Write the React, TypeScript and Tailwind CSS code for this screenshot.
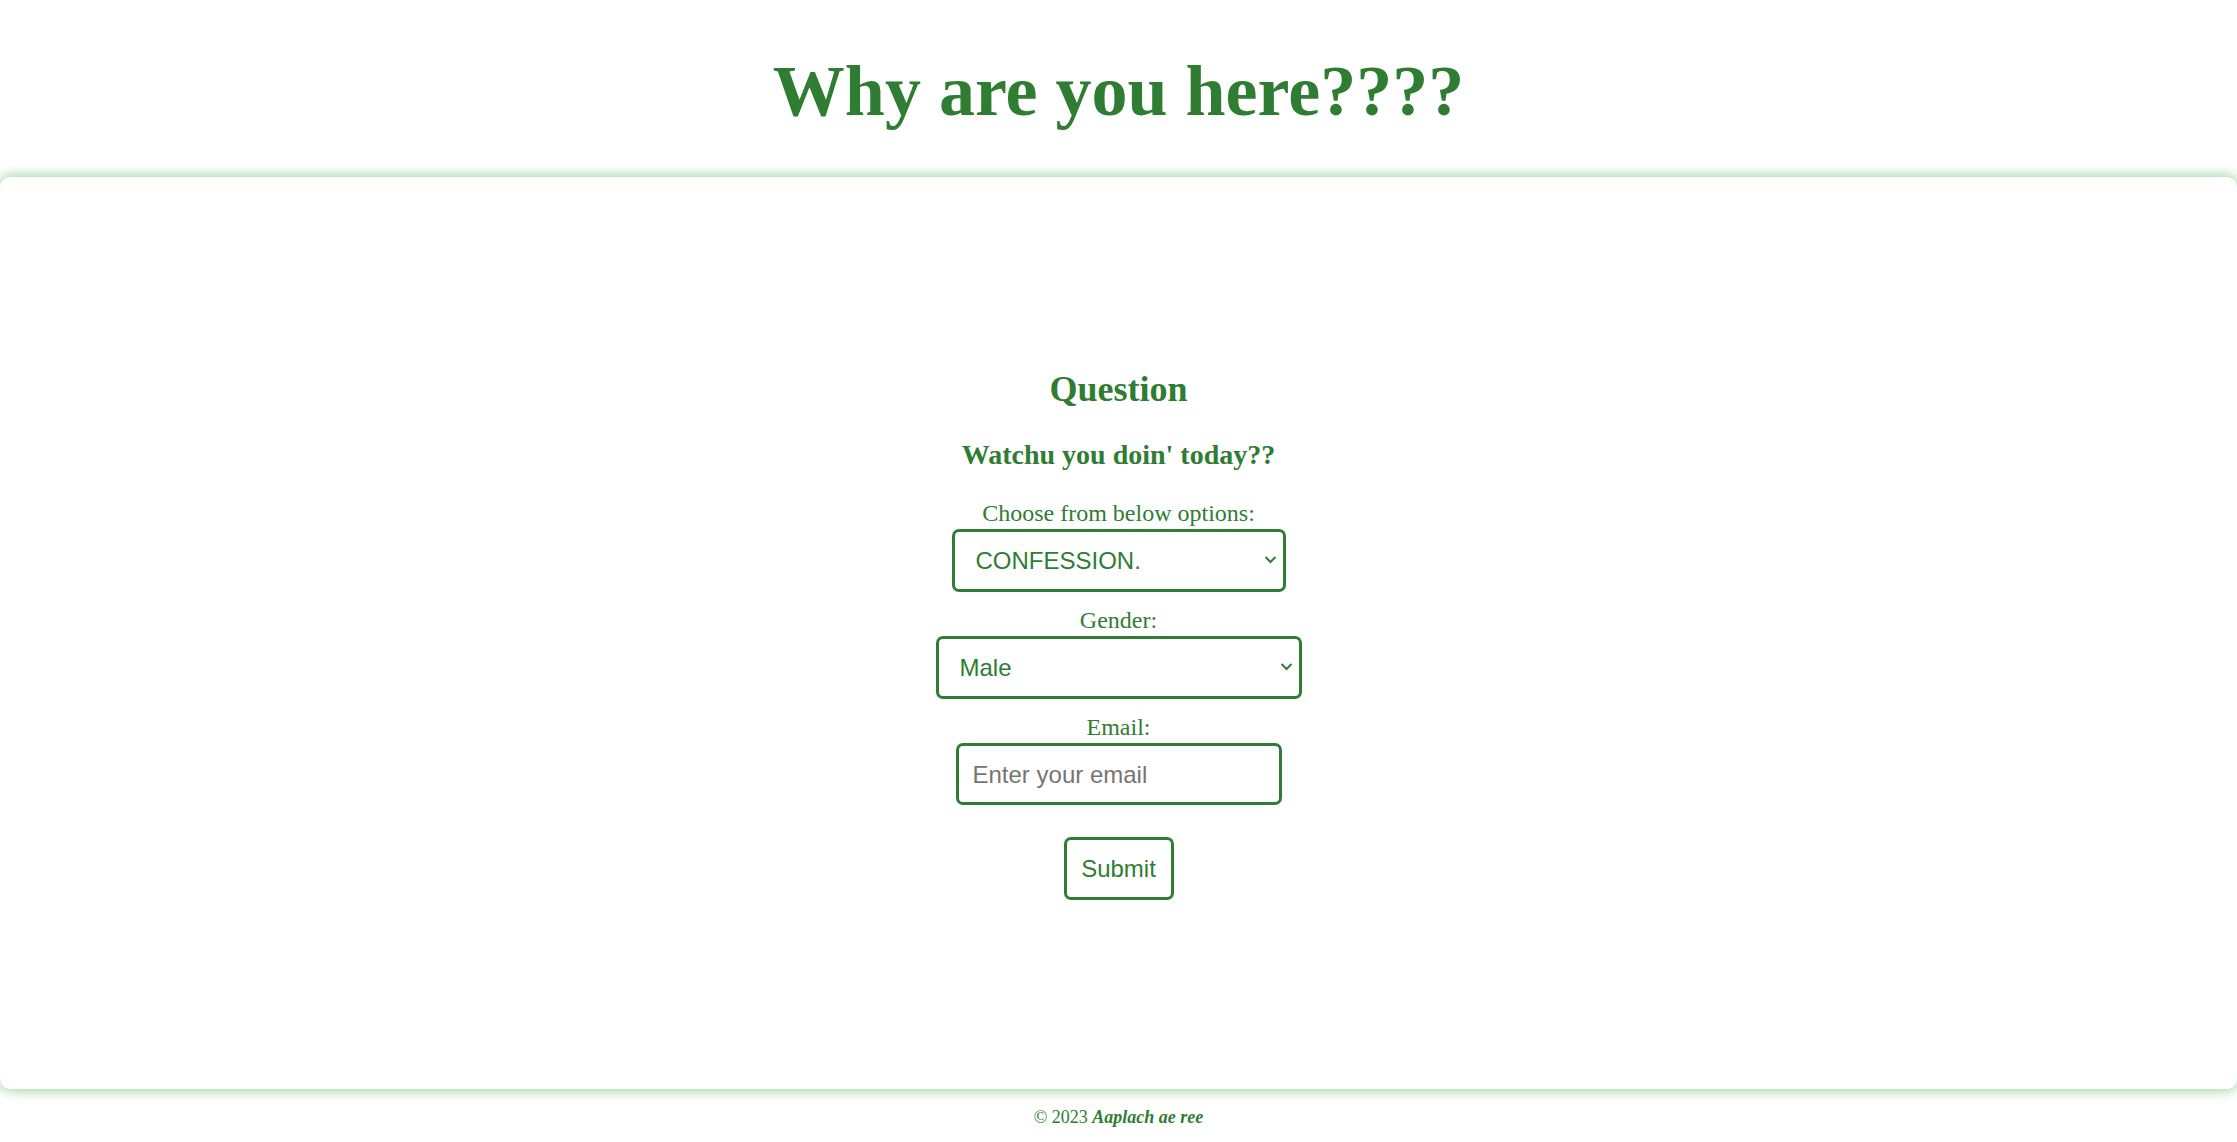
import React from "react";

const Chevron = () => (
  <svg
    className="pointer-events-none absolute right-[9px] top-1/2 -translate-y-1/2"
    width="13"
    height="9"
    viewBox="0 0 13 9"
    fill="none"
  >
    <polyline points="1.5,1.5 6.5,6.5 11.5,1.5" stroke="#2e7d32" strokeWidth="2" />
  </svg>
);

export default function App() {
  return (
    <div className="bg-white text-[#2e7d32] font-['Liberation_Serif','Times_New_Roman',serif]">
      <h1 className="pt-[50px] pb-[45px] text-center text-[72px] font-bold leading-[82px]">
        Why are you here????
      </h1>

      <div className="flex h-[912px] flex-col items-center justify-center rounded-[10px] bg-white shadow-[0_0_14px_#81c784]">
        <h2 className="mt-[2px] text-[36px] font-bold leading-[41px]">Question</h2>
        <h3 className="mt-[29px] text-[28px] font-bold leading-[32px]">
          Watchu you doin' today??
        </h3>

        <label className="mt-[28px] text-[24px] leading-[28px]">Choose from below options:</label>
        <div className="relative mt-[2px]">
          <select
            defaultValue="confession"
            className="h-[63px] w-[334px] appearance-none rounded-[7px] border-[3px] border-[#2e7d32] bg-white pl-[21px] pt-[2px] font-['Liberation_Sans',Arial,sans-serif] text-[24px] text-[#2e7d32] outline-none"
          >
            <option value="confession">CONFESSION.</option>
            <option value="other">OTHER.</option>
          </select>
          <Chevron />
        </div>

        <label className="mt-[14px] text-[24px] leading-[28px]">Gender:</label>
        <div className="relative mt-[2px]">
          <select
            defaultValue="male"
            className="h-[63px] w-[366px] appearance-none rounded-[7px] border-[3px] border-[#2e7d32] bg-white pl-[21px] pt-[2px] font-['Liberation_Sans',Arial,sans-serif] text-[24px] text-[#2e7d32] outline-none"
          >
            <option value="male">Male</option>
            <option value="female">Female</option>
            <option value="none">Prefer not to say</option>
          </select>
          <Chevron />
        </div>

        <label className="mt-[14px] text-[24px] leading-[28px]">Email:</label>
        <input
          type="email"
          placeholder="Enter your email"
          className="mt-[2px] h-[62px] w-[326px] rounded-[7px] border-[3px] border-[#2e7d32] bg-white pl-[14px] pt-[2px] font-['Liberation_Sans',Arial,sans-serif] text-[24px] text-[#2e7d32] outline-none placeholder:text-[#757575]"
        />

        <button
          type="button"
          className="mt-[32px] h-[63px] w-[110px] rounded-[7px] border-[3px] border-[#2e7d32] bg-white pt-[2px] font-['Liberation_Sans',Arial,sans-serif] text-[24px] text-[#2e7d32]"
        >
          Submit
        </button>
      </div>

      <p className="pt-[18px] text-center text-[18px] leading-[21px]">
        © 2023 <em className="font-bold">Aaplach ae ree</em>
      </p>
    </div>
  );
}
